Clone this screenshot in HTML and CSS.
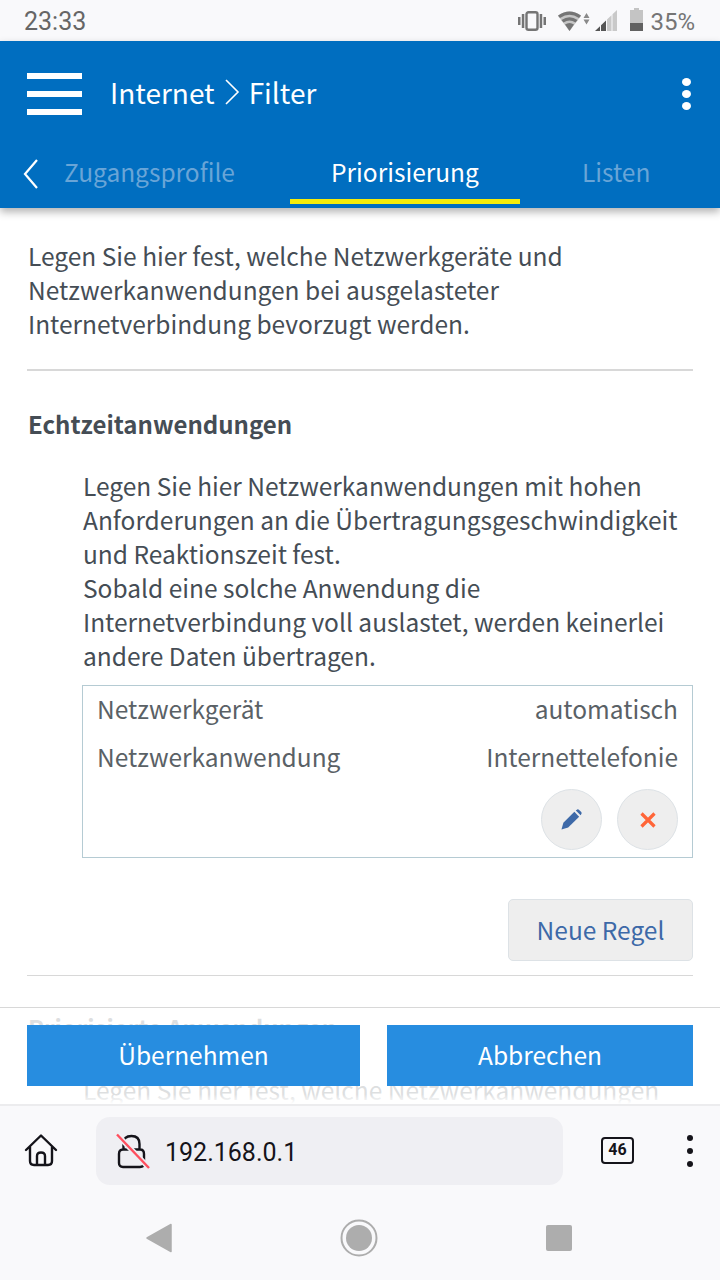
FILE: index.html
```html
<!DOCTYPE html>
<html lang="de">

<head>
    <meta charset="UTF-8">
    <meta name="viewport" content="width=device-width, initial-scale=1.0">
    <title>Internet Filter</title>
    <link rel="stylesheet" href="styles.css">
</head>

<body>
    <div class="phone">

        <!-- Status bar -->
        <div class="status-bar">
            <span class="status-time">23:33</span>
            <div class="status-icons">
                <svg class="icon-vibrate" width="28" height="20" viewBox="0 0 28 20">
                    <rect x="8.5" y="1.2" width="11" height="17.600" rx="2" fill="none" stroke="#757575" stroke-width="2.400"/>
                    <rect x="0" y="6" width="2.500" height="8" fill="#757575"/>
                    <rect x="3.800" y="3" width="2.500" height="14" fill="#757575"/>
                    <rect x="21.700" y="3" width="2.500" height="14" fill="#757575"/>
                    <rect x="25.500" y="6" width="2.500" height="8" fill="#757575"/>
                </svg>
                <svg class="icon-wifi" width="32" height="20" viewBox="0 0 32 20">
                    <path d="M0 5 Q11.500 -4 23 5 L11.500 20 Z" fill="#c6c6c6"/>
                    <path d="M0 4.500 Q11.500 -3.500 23 4.500 L21 7 Q11.500 0.500 2 7 Z" fill="#757575"/>
                    <path d="M3.500 9 Q11.500 3.500 19.500 9 L17.500 11.500 Q11.500 7.500 5.500 11.500 Z" fill="#757575"/>
                    <path d="M7 13.500 Q11.500 10.500 16 13.500 L11.500 20 Z" fill="#757575"/>
                    <path d="M28.500 2 L31.500 7 H25.500 Z M28.500 13.500 L31.500 8.500 H25.500 Z" fill="#8a8a8a"/>
                </svg>
                <svg class="icon-signal" width="22" height="21" viewBox="0 0 22 21">
                    <path d="M0 21 L5 16.200 V21 Z M6 15.300 L11 10.500 V21 H6 Z" fill="#555"/>
                    <path d="M12 9.500 L16.500 5.250 V21 H12 Z M17.500 4.300 L22 0 V21 H17.500 Z" fill="#c9c9c9"/>
                </svg>
                <svg class="icon-battery" width="13" height="23" viewBox="0 0 13 23">
                    <path d="M4 0 H9 V2 H13 V23 H0 V2 H4 Z" fill="#c4c4c4"/>
                    <rect x="0" y="15" width="13" height="8" fill="#616161"/>
                </svg>
                <span class="status-battery">35%</span>
            </div>
        </div>

        <!-- Blue header with tabs -->
        <header class="app-header">
            <div class="title-row">
                <div class="hamburger"><span></span><span></span><span></span></div>
                <h1 class="page-title">
                    Internet
                    <svg width="16" height="26" viewBox="0 0 16 26"><path d="M2 1 L14 13 L2 25" fill="none" stroke="#fff" stroke-width="1.6"/></svg>
                    Filter
                </h1>
                <div class="kebab"><span></span><span></span><span></span></div>
            </div>
            <nav class="tabs">
                <svg class="tab-back" width="16" height="30" viewBox="0 0 16 30"><path d="M14 1 L2 15 L14 29" fill="none" stroke="#fff" stroke-width="2.2"/></svg>
                <a class="tab tab-first">Zugangsprofile</a>
                <a class="tab tab-active">Priorisierung</a>
                <a class="tab tab-last">Listen</a>
            </nav>
        </header>

        <!-- Page content -->
        <main class="content">
            <p class="intro">Legen Sie hier fest, welche Netzwerkgeräte und Netzwerkanwendungen bei ausgelasteter Internetverbindung bevorzugt werden.</p>
            <hr class="divider">

            <h2 class="section-title">Echtzeitanwendungen</h2>
            <div class="section-body">
                <p>Legen Sie hier Netzwerkanwendungen mit hohen Anforderungen an die Übertragungsgeschwindigkeit und Reaktionszeit fest.<br>Sobald eine solche Anwendung die Internetverbindung voll auslastet, werden keinerlei andere Daten übertragen.</p>
                <div class="rule-card">
                    <div class="rule-row"><span>Netzwerkgerät</span><span>automatisch</span></div>
                    <div class="rule-row"><span>Netzwerkanwendung</span><span>Internettelefonie</span></div>
                    <div class="rule-actions">
                        <button class="round-btn">
                            <svg width="21" height="21" viewBox="0 0 22 22"><path d="M0.5 21.5 L2.5 14.5 L14 3 L19 8 L7.5 19.5 Z" fill="#3d69a8"/><path d="M15.5 1.5 L17 0.5 Q18 0 19 1 L21 3 Q22 4 21.5 5 L20.5 6.5 Z" fill="#3d69a8"/></svg>
                        </button>
                        <button class="round-btn">
                            <svg width="18" height="18" viewBox="0 0 18 18"><path d="M2.500 2.500 L15.500 15.500 M15.500 2.500 L2.500 15.500" fill="none" stroke="#ff6538" stroke-width="3.200"/></svg>
                        </button>
                    </div>
                </div>
            </div>
            <div class="new-rule-row"><button class="new-rule">Neue Regel</button></div>
            <hr class="divider">

            <h2 class="section-title section-next">Priorisierte Anwendungen</h2>
            <div class="section-body"><p>Legen Sie hier fest, welche Netzwerkanwendungen</p></div>

            <div class="action-bar">
                <button class="action-btn action-save">Übernehmen</button>
                <button class="action-btn action-cancel">Abbrechen</button>
            </div>
        </main>

        <!-- Browser toolbar -->
        <div class="browser-bar">
            <svg class="browser-home" width="34" height="34" viewBox="0 0 34 34">
                <path d="M2 17 L17 2.5 L32 17 M6 14 V28 Q6 32 10 32 H24 Q28 32 28 28 V14 M13 32 V23 Q13 19.500 17 19.500 Q21 19.500 21 23 V32" fill="none" stroke="#15141a" stroke-width="2.4" stroke-linecap="round" stroke-linejoin="round"/>
            </svg>
            <div class="url-pill">
                <svg width="34" height="36" viewBox="0 0 34 36">
                    <path d="M3 21 Q3 16.500 7 16.500 H24 Q28 16.500 28 21 V30 Q28 34 24 34 H7 Q3 34 3 30 Z M7.500 16.500 V11 Q7.500 3 15.500 3 Q23.500 3 23.500 11 V16.500" fill="none" stroke="#15141a" stroke-width="2.400"/>
                    <path d="M1 1.500 L33 35" stroke="#efeff3" stroke-width="5.500"/>
                    <path d="M1 1.500 L33 35" stroke="#ff4f5e" stroke-width="2.400"/>
                </svg>
                <span class="url-text">192.168.0.1</span>
            </div>
            <div class="tab-count">46</div>
            <div class="browser-menu"><span></span><span></span><span></span></div>
        </div>

        <!-- Android nav -->
        <div class="nav-bar">
            <svg width="26" height="30" viewBox="0 0 26 30"><path d="M25 1.500 V28.500 L1 15 Z" fill="#adadad" stroke="#adadad" stroke-width="1.500" stroke-linejoin="round"/></svg>
            <svg width="38" height="38" viewBox="0 0 38 38"><circle cx="19" cy="19" r="17.500" fill="none" stroke="#adadad" stroke-width="2"/><circle cx="19" cy="19" r="13" fill="#adadad"/></svg>
            <div class="nav-square"></div>
        </div>
    </div>
</body>

</html>
```

FILE: styles.css
```css
* {
    margin: 0;
    padding: 0;
    box-sizing: border-box;
}

html, body {
    width: 720px;
    height: 1280px;
    overflow: hidden;
}

body {
    font-family: "Noto Sans CJK SC", "Noto Sans", sans-serif;
    color: #454d55;
}

.phone {
    width: 720px;
    height: 1280px;
    display: flex;
    flex-direction: column;
    background: #fff;
}

/* Status bar */
.status-bar {
    height: 41px;
    flex: none;
    padding: 2px 25px 0 24px;
    display: flex;
    justify-content: space-between;
    align-items: center;
    background: #f9f9fb;
    color: #666;
    font-family: Roboto, sans-serif;
    font-size: 25px;
}

.status-icons {
    display: flex;
    align-items: center;
    margin-top: -2px;
}

.icon-wifi {
    margin-left: 12px;
}

.icon-signal {
    margin-left: 5px;
}

.icon-battery {
    margin: -2px 0 0 13px;
}

.status-battery {
    margin: 3px 0 0 7px;
    color: #757575;
    font-size: 24px;
}

/* Header */
.app-header {
    height: 167px;
    flex: none;
    position: relative;
    z-index: 2;
    background: #006ec0;
    box-shadow: 0 4px 8px rgba(0, 0, 0, 0.3);
    color: #fff;
}

.title-row {
    height: 105px;
    padding: 0 27px;
    display: flex;
    align-items: center;
}

.hamburger {
    width: 55px;
    height: 42px;
    display: flex;
    flex-direction: column;
    justify-content: space-between;
}

.hamburger span {
    height: 6px;
    background: #fff;
}

.page-title {
    margin: -3px 0 0 28px;
    display: flex;
    align-items: center;
    gap: 9px;
    font-size: 28px;
    font-weight: 400;
    line-height: 40px;
}

.kebab {
    margin-left: auto;
    margin-right: 2px;
    display: flex;
    flex-direction: column;
    gap: 4px;
}

.kebab span {
    width: 9px;
    height: 8px;
    border-radius: 50%;
    background: #fff;
}

.tabs {
    height: 62px;
    padding-left: 23px;
    display: flex;
    align-items: stretch;
}

.tab-back {
    margin-top: 13px;
}

.tab {
    display: block;
    text-align: center;
    font-size: 24.5px;
    line-height: 52px;
    color: #69a5d7;
}

.tab-first {
    margin-left: 25px;
    width: 170px;
}

.tab-active {
    margin-left: 56px;
    width: 230px;
    height: 58px;
    color: #fff;
    border-bottom: 5px solid #f5ec0a;
}

.tab-last {
    margin-left: 62px;
    width: 67px;
}

/* Content */
.content {
    flex: 1;
    min-height: 0;
    position: relative;
    overflow: hidden;
    padding: 31px 27px 0 27px;
    font-size: 24.5px;
    line-height: 34px;
}

.content p,
.section-title {
    padding-left: 1px;
}

.divider {
    border: 0;
    border-top: 2px solid #d8d8d8;
}

.intro + .divider {
    margin-top: 28px;
}

.section-title {
    margin-top: 35px;
    font-size: 24px;
    font-weight: 700;
    line-height: 36px;
}

.section-body {
    margin-top: 27px;
    padding-left: 55px;
}

.section-next {
    margin-top: 34px;
}

.section-next + .section-body {
    margin-top: 27px;
}

.rule-card {
    margin-top: 12px;
    height: 173px;
    padding: 0 14px;
    border: 1px solid #b5cbd3;
}

.rule-row {
    height: 48px;
    padding-bottom: 2px;
    display: flex;
    justify-content: space-between;
    align-items: center;
    color: #5a6166;
}

.rule-actions {
    margin-top: 7px;
    display: flex;
    justify-content: flex-end;
    gap: 15px;
}

.round-btn {
    width: 61px;
    height: 61px;
    display: flex;
    justify-content: center;
    align-items: center;
    border-radius: 50%;
    border: 1px solid #dde2e6;
    background: #eee;
}

.new-rule-row {
    margin-top: 41px;
    display: flex;
    justify-content: flex-end;
}

.new-rule {
    width: 185px;
    height: 62px;
    padding-bottom: 2px;
    border: 1px solid #dde2e6;
    border-radius: 5px;
    background: #eee;
    color: #3d69a8;
    font-family: inherit;
    font-size: 24.5px;
}

.new-rule-row + .divider {
    margin-top: 14px;
    border-top-width: 1px;
}

/* Save / cancel overlay */
.action-bar {
    position: absolute;
    left: 0;
    right: 0;
    top: 799px;
    bottom: 0;
    padding: 17px 27px 0;
    display: flex;
    align-items: flex-start;
    justify-content: space-between;
    background: linear-gradient(rgba(255, 255, 255, 0.82) 90%, rgba(255, 255, 255, 1));
    border-top: 1px solid #d8d8d8;
}

.action-btn {
    height: 61px;
    padding-bottom: 2px;
    border: 0;
    background: #278de0;
    color: #fff;
    font-family: inherit;
    font-size: 24.5px;
}

.action-save {
    width: 333px;
}

.action-cancel {
    width: 306px;
}

/* Browser toolbar */
.browser-bar {
    height: 96px;
    flex: none;
    display: flex;
    align-items: flex-start;
    padding: 11px 0 0 24px;
    background: #f9f9fb;
    border-top: 2px solid #ececee;
}

.browser-home {
    margin-top: 16px;
}

.url-pill {
    width: 467px;
    height: 68px;
    margin-left: 38px;
    padding-left: 20px;
    display: flex;
    align-items: center;
    border-radius: 14px;
    background: #efeff3;
}

.url-text {
    margin: 3px 0 0 15px;
    color: #15141a;
    font-family: Roboto, sans-serif;
    font-size: 25px;
}

.tab-count {
    width: 33px;
    height: 27px;
    margin: 20px 0 0 38px;
    border: 2.5px solid #15141a;
    border-radius: 4px;
    color: #15141a;
    font-family: Roboto, sans-serif;
    font-size: 16px;
    font-weight: 700;
    line-height: 22px;
    text-align: center;
}

.browser-menu {
    margin: 18px 0 0 53px;
    display: flex;
    flex-direction: column;
    gap: 7px;
}

.browser-menu span {
    width: 6px;
    height: 6px;
    border-radius: 50%;
    background: #15141a;
}

/* Android nav */
.nav-bar {
    height: 80px;
    flex: none;
    padding: 0 148px 4px 146px;
    display: flex;
    justify-content: space-between;
    align-items: center;
    background: #f9f9fb;
}

.nav-square {
    width: 26px;
    height: 26px;
    border-radius: 2px;
    background: #adadad;
}
```
